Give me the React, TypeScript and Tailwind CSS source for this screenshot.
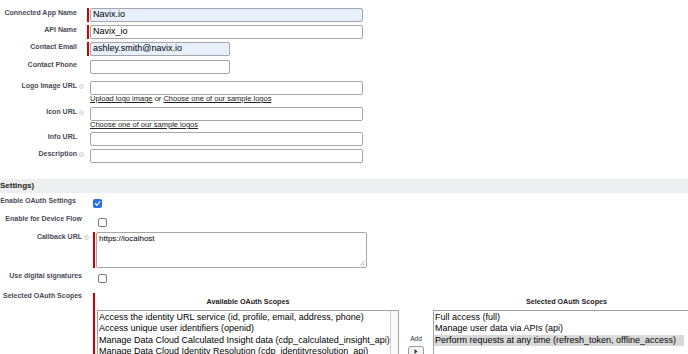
import type { ReactNode } from 'react';

const availableScopes = [
  'Access the identity URL service (id, profile, email, address, phone)',
  'Access unique user identifiers (openid)',
  'Manage Data Cloud Calculated Insight data (cdp_calculated_insight_api)',
  'Manage Data Cloud Identity Resolution (cdp_identityresolution_api)',
];

const selectedScopes = [
  'Full access (full)',
  'Manage user data via APIs (api)',
  'Perform requests at any time (refresh_token, offline_access)',
];

function HelpIcon() {
  return (
    <svg
      width="5"
      height="5"
      viewBox="0 0 10 10"
      className="absolute right-[-7px] top-[2px]"
    >
      <circle cx="5" cy="5" r="4" fill="none" stroke="#c4c4c4" strokeWidth="1.6" />
      <circle cx="5" cy="5" r="1.4" fill="#c4c4c4" />
    </svg>
  );
}

function Label({
  text,
  help,
  width,
}: {
  text: string;
  help?: boolean;
  width: string;
}) {
  return (
    <div
      className={`relative shrink-0 whitespace-nowrap text-right text-[7px] font-bold leading-[8px] text-[#4a4a56] ${width}`}
    >
      {text}
      {help && <HelpIcon />}
    </div>
  );
}

function TextInput({
  value,
  width,
  filled,
}: {
  value?: string;
  width: string;
  filled?: boolean;
}) {
  return (
    <div
      className={`flex h-[14px] items-center rounded-[2px] border border-[#a6a6a6] pl-[2px] text-[9px] text-black ${width} ${
        filled ? 'bg-[#e8f0fe]' : 'bg-white'
      }`}
    >
      {value}
    </div>
  );
}

/* top block: label column ends at x=77, fields start at x=87 */
function InfoRow({
  label,
  help,
  required,
  className,
  children,
}: {
  label: string;
  help?: boolean;
  required?: boolean;
  className?: string;
  children: ReactNode;
}) {
  return (
    <div className={`flex items-start ${className ?? ''}`}>
      <div className="pt-[1px]">
        <Label text={label} help={help} width="w-[77px]" />
      </div>
      <div className="ml-[10px] flex flex-col">
        <div className="flex">
          {required ? (
            <div className="mr-[1px] h-[14px] w-[2px] bg-[#c00]" />
          ) : (
            <div className="w-[3px]" />
          )}
          {children}
        </div>
      </div>
    </div>
  );
}

function LinkLine({ children }: { children: ReactNode }) {
  return (
    <div className="ml-[90px] whitespace-nowrap text-[7.5px] leading-[8px] text-[#222]">
      {children}
    </div>
  );
}

function Checkbox({ checked }: { checked?: boolean }) {
  if (checked) {
    return (
      <div className="flex h-[9px] w-[9px] items-center justify-center rounded-[2px] bg-[#2a6fe6]">
        <svg width="7" height="7" viewBox="0 0 10 10">
          <path
            d="M2 5.3 L4.2 7.5 L8.2 2.5"
            fill="none"
            stroke="white"
            strokeWidth="1.7"
            strokeLinecap="round"
            strokeLinejoin="round"
          />
        </svg>
      </div>
    );
  }
  return <div className="h-[9px] w-[9px] rounded-[2px] border border-[#7a7a7a] bg-white" />;
}

export default function App() {
  return (
    <div className="h-[354px] w-[688px] overflow-hidden bg-white font-['Liberation_Sans',Arial,sans-serif] pt-[8px]">
      {/* Basic information */}
      <InfoRow label="Connected App Name" required>
        <TextInput value="Navix.io" width="w-[273px]" filled />
      </InfoRow>
      <InfoRow label="API Name" required className="mt-[3px]">
        <TextInput value="Navix_io" width="w-[273px]" />
      </InfoRow>
      <InfoRow label="Contact Email" required className="mt-[3px]">
        <TextInput value="ashley.smith@navix.io" width="w-[140px]" filled />
      </InfoRow>
      <InfoRow label="Contact Phone" className="mt-[4px]">
        <TextInput width="w-[140px]" />
      </InfoRow>
      <InfoRow label="Logo Image URL" help className="mt-[7px]">
        <TextInput width="w-[273px]" />
      </InfoRow>
      <LinkLine>
        <span className="underline">Upload logo image</span> or{' '}
        <span className="underline">Choose one of our sample logos</span>
      </LinkLine>
      <InfoRow label="Icon URL" help className="mt-[4px]">
        <TextInput width="w-[273px]" />
      </InfoRow>
      <LinkLine>
        <span className="underline">Choose one of our sample logos</span>
      </LinkLine>
      <InfoRow label="Info URL" className="mt-[3px]">
        <TextInput width="w-[273px]" />
      </InfoRow>
      <InfoRow label="Description" help className="mt-[3px]">
        <TextInput width="w-[273px]" />
      </InfoRow>

      {/* API (Enable OAuth Settings) */}
      <div className="mt-[16px] h-[14px] bg-[#edeef0] text-[8px] font-bold leading-[14px] text-[#222]">
        Settings)
      </div>

      <div className="mt-[4px] flex items-start">
        <Label text="Enable OAuth Settings" width="w-[76px]" />
        <div className="ml-[17px] mt-[2px]">
          <Checkbox checked />
        </div>
      </div>

      <div className="mt-[7px] flex items-start">
        <Label text="Enable for Device Flow" width="w-[82px]" />
        <div className="ml-[16px] mt-[3px]">
          <Checkbox />
        </div>
      </div>

      <div className="mt-[5px] flex items-start">
        <div className="pt-[1px]">
          <Label text="Callback URL" help width="w-[82px]" />
        </div>
        <div className="ml-[11px] flex">
          <div className="mr-[1px] h-[36px] w-[2px] bg-[#c00]" />
          <div className="relative h-[36px] w-[271px] rounded-[2px] border border-[#a6a6a6] pl-[2px] pt-[1px] text-[8px] leading-[10px] text-black">
            https://localhost
            <svg
              width="6"
              height="6"
              viewBox="0 0 6 6"
              className="absolute bottom-[1px] right-[1px]"
            >
              <path d="M5.5 1 L1 5.5 M5.5 3.5 L3.5 5.5" stroke="#9a9a9a" strokeWidth="0.8" />
            </svg>
          </div>
        </div>
      </div>

      <div className="mt-[4px] flex items-start">
        <Label text="Use digital signatures" width="w-[82px]" />
        <div className="ml-[16px] mt-[2px]">
          <Checkbox />
        </div>
      </div>

      {/* Selected OAuth Scopes */}
      <div className="mt-[9px] flex items-start">
        <Label text="Selected OAuth Scopes" width="w-[82px]" />
        <div className="ml-[11px] flex">
          <div className="mt-[1px] h-[70px] w-[2px] bg-[#c00]" />
          <div className="ml-[2px] flex">
            <div className="flex w-[302px] flex-col">
              <div className="mt-[6px] text-center text-[7.2px] font-bold leading-[8px] text-[#222]">
                Available OAuth Scopes
              </div>
              <div className="mt-[4px] flex h-[60px] border border-[#a0a0a0] bg-white">
                <div className="flex-1 whitespace-nowrap pl-[1px] pt-[1px] text-[9px] leading-[11.3px] text-black">
                  {availableScopes.map((s) => (
                    <div key={s}>{s}</div>
                  ))}
                </div>
                <div className="w-[15px] border-l border-[#cfcfcf] bg-[#fafafa]" />
              </div>
            </div>

            <div className="flex w-[34px] flex-col items-center pt-[43px]">
              <div className="text-[6.5px] leading-[8px] text-[#333]">Add</div>
              <div className="mt-[3px] flex h-[14px] w-[16px] items-start justify-center rounded-[3px] border border-[#9a9a9a] bg-[#f4f4f4] pt-[2px]">
                <svg width="4" height="5" viewBox="0 0 4 5">
                  <path d="M0.5 0 L3.5 2.5 L0.5 5 Z" fill="#333" />
                </svg>
              </div>
            </div>

            <div className="flex w-[267px] flex-col">
              <div className="mt-[6px] text-center text-[7.2px] font-bold leading-[8px] text-[#222]">
                Selected OAuth Scopes
              </div>
              <div className="mt-[4px] h-[60px] border border-[#a0a0a0] bg-white pt-[1px] text-[9px] leading-[11.3px] text-black">
                {selectedScopes.map((s, i) => (
                  <div
                    key={s}
                    className={`whitespace-nowrap pl-[1px] ${
                      i === 2 ? 'mr-[15px] bg-[#d9d9d9]' : ''
                    }`}
                  >
                    {s}
                  </div>
                ))}
              </div>
            </div>
          </div>
        </div>
      </div>
    </div>
  );
}
